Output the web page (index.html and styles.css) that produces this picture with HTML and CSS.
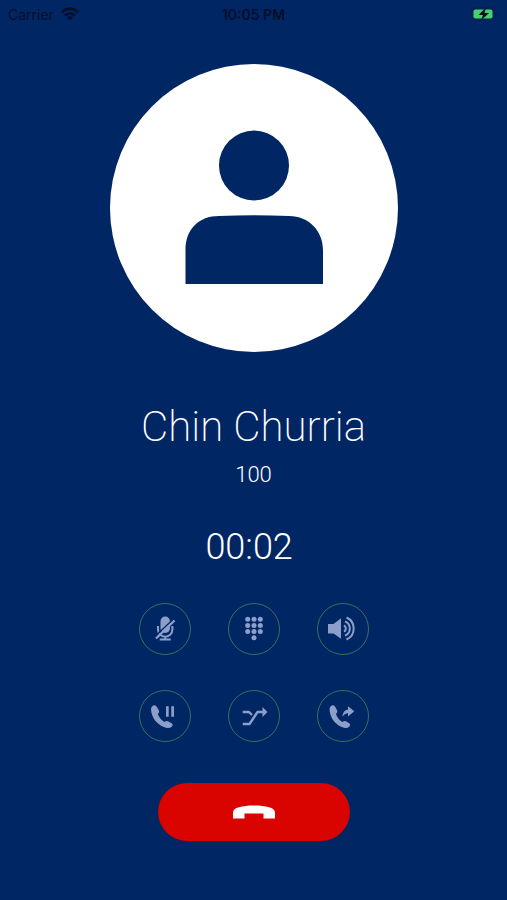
FILE: index.html
```html
<!DOCTYPE html>
<html lang="en">
<head>
<meta charset="utf-8">
<meta name="viewport" content="width=device-width, initial-scale=1">
<title>Call with Chin Churria</title>
<link rel="stylesheet" href="styles.css">
</head>
<body>
<header class="status">
  <div class="status-network">
    <span>Carrier</span>
    <svg width="18" height="14" viewBox="0 0 18 14" fill="none" stroke="currentColor" stroke-width="2.6" aria-hidden="true">
      <path d="M1 5.3Q9-2 17 5.3M4 8.6Q9 4 14 8.6"/>
      <path d="M9 13.5 6 10.5Q9 8.2 12 10.5Z" fill="currentColor" stroke="none"/>
    </svg>
  </div>
  <time class="status-time">10:05 PM</time>
  <div class="status-battery">
    <svg width="28" height="14" viewBox="0 0 28 14" aria-hidden="true">
      <rect x="1" y="1" width="23" height="12" rx="3.5" fill="none" stroke="#001d50"/>
      <path d="M26 5v4q2-2 0-4" fill="#001d50"/>
      <rect x="2.500" y="2.500" width="19" height="9" rx="2" fill="#45d16b"/>
      <path d="M15 .5 7.500 8H12l-2 5.500L18 6h-4.500Z" fill="#021127"/>
    </svg>
  </div>
</header>
<main class="call">
  <svg class="avatar" viewBox="0 0 288 288" role="img" aria-label="Contact photo">
    <circle cx="144" cy="144" r="144" fill="#fff"/>
    <circle cx="144" cy="101.500" r="35" fill="#002664"/>
    <path d="M75.500 220V186C75.500 165 89 152 109 152Q144 150.500 179 152C199 152 213 167 213 186V220Z" fill="#002664"/>
  </svg>
  <h1 class="name">Chin Churria</h1>
  <p class="number">100</p>
  <p class="timer">00:02&nbsp;</p>
  <div class="controls">
    <button class="control" type="button" aria-label="Mute">
      <svg viewBox="0 0 52 52" fill="none" stroke="currentColor" stroke-width="2">
        <rect x="21.500" y="13.500" width="9.500" height="16.500" rx="4.700" fill="currentColor" stroke="none"/>
        <path d="M19 23v3.500a7.200 7.200 0 0 0 14.400 0V23M26.200 33v3.500M20.700 36.500h11"/>
        <path d="M16 33.500 34.500 16" stroke="#002664" stroke-width="1.500"/>
        <path d="M17 35.500 35.500 17.500" stroke-width="2.400"/>
      </svg>
    </button>
    <button class="control" type="button" aria-label="Keypad">
      <svg viewBox="0 0 52 52" fill="currentColor">
        <circle cx="19.700" cy="16.200" r="2.500"/><circle cx="26" cy="16.200" r="2.500"/><circle cx="32.300" cy="16.200" r="2.500"/>
        <circle cx="19.700" cy="22.400" r="2.500"/><circle cx="26" cy="22.400" r="2.500"/><circle cx="32.300" cy="22.400" r="2.500"/>
        <circle cx="19.700" cy="28.600" r="2.500"/><circle cx="26" cy="28.600" r="2.500"/><circle cx="32.300" cy="28.600" r="2.500"/>
        <circle cx="26" cy="34.800" r="2.500"/>
      </svg>
    </button>
    <button class="control" type="button" aria-label="Speaker">
      <svg viewBox="0 0 52 52" fill="none" stroke="currentColor" stroke-width="2">
        <path d="M11 21h5.500L24 15.300v20.500L16.500 30.500H11Z" fill="currentColor" stroke="none"/>
        <path d="M27 22.300a3.700 3.700 0 0 1 0 6.400M28 18.300a7.800 7.800 0 0 1 0 14.400M29.500 14.500a12 12 0 0 1 0 22"/>
      </svg>
    </button>
    <button class="control" type="button" aria-label="Hold">
      <svg viewBox="0 0 52 52" fill="currentColor">
        <path d="M13 16.500Q15.500 14 17.500 16.500L20 20.500Q20.800 22.300 18.800 24Q20.500 29 25.700 32Q27 30.500 29 31.200L33 33.500Q34.500 34.700 33 36.500Q30.500 38.800 27 37.700C19 35.500 12.500 28.500 12 19.500Q12 17.500 13 16.500Z"/>
        <path d="M27 16.300h2.700v10.500H27ZM32.300 16.300H35v10.500h-2.700Z"/>
      </svg>
    </button>
    <button class="control" type="button" aria-label="Merge calls">
      <svg viewBox="0 0 52 52" fill="none" stroke="currentColor" stroke-width="2.400" stroke-linejoin="round">
        <path d="M14.700 22H21L24 25M14.700 34H21.500L29.500 22H35"/>
        <path d="M34.500 17 39.500 22 34.500 27Z" fill="currentColor" stroke="none"/>
      </svg>
    </button>
    <button class="control" type="button" aria-label="Transfer">
      <svg viewBox="0 0 52 52" fill="currentColor">
        <path d="M13.500 16.500Q16 14 18 16.500L20.200 20.500Q21 22.300 19 24Q20.500 29 25.400 32Q27 30.500 29 31.200L32.500 33.500Q34 34.700 32.500 36.500Q30 38.800 27 37.700C19 35.500 13 28.500 12.500 19.500Q12.500 17.500 13.500 16.500Z"/>
        <path d="M25.500 26.500Q26 20 31 19.500V16.300L37.300 21.300 31 26.500V23.200Q28 23 25.500 26.500Z"/>
      </svg>
    </button>
  </div>
  <button class="hangup" type="button" aria-label="End call">
    <svg width="42" height="14" viewBox="0 0 42 14" fill="#fff" aria-hidden="true">
      <path d="M0 13.500V7.500C0 2.500 9 .5 21 .5S42 2.500 42 7.500V13.500H30.500V8.500H11.500V13.500Z"/>
    </svg>
  </button>
</main>
</body>
</html>
```
FILE: styles.css
```css
* {
  box-sizing: border-box;
}

body {
  margin: 0;
  min-height: 100vh;
  background: #002664;
  color: #fff;
  font-family: Roboto, "Liberation Sans", sans-serif;
}

.status {
  display: grid;
  grid-template-columns: 1fr auto 1fr;
  align-items: center;
  height: 28px;
  padding: 0 8px;
  color: #010f2b;
  font-family: Inter, "Liberation Sans", sans-serif;
  font-size: 14px;
}

.status-network {
  display: flex;
  align-items: center;
  gap: 7px;
}

.status-time {
  font-weight: 600;
}

.status-battery {
  display: flex;
  justify-content: flex-end;
}

.call {
  display: flex;
  flex-direction: column;
  align-items: center;
  padding: 36px 16px 56px;
}

.avatar {
  width: 288px;
  max-width: 100%;
}

.name,
.number,
.timer {
  margin: 0;
  text-align: center;
}

.name {
  margin-top: 49px;
  font-size: 42px;
  font-weight: 200;
  line-height: 52px;
}

.number {
  margin-top: 8px;
  font-size: 22px;
  font-weight: 300;
  line-height: 28px;
}

.timer {
  margin-top: 36px;
  font-size: 36px;
  font-weight: 300;
  line-height: 44px;
}

.controls {
  display: grid;
  grid-template-columns: repeat(3, auto);
  gap: 35px 37px;
  margin-top: 34px;
}

.control {
  width: 52px;
  height: 52px;
  padding: 0;
  border: 1px solid #38715f;
  border-radius: 50%;
  background: none;
  color: #8c9fca;
}

.control svg {
  display: block;
  margin: -1px;
  width: 52px;
  height: 52px;
}

.hangup {
  display: flex;
  align-items: center;
  justify-content: center;
  width: 192px;
  height: 58px;
  margin-top: 41px;
  padding: 0;
  border: 0;
  border-radius: 29px;
  background: #d90400;
}
```
